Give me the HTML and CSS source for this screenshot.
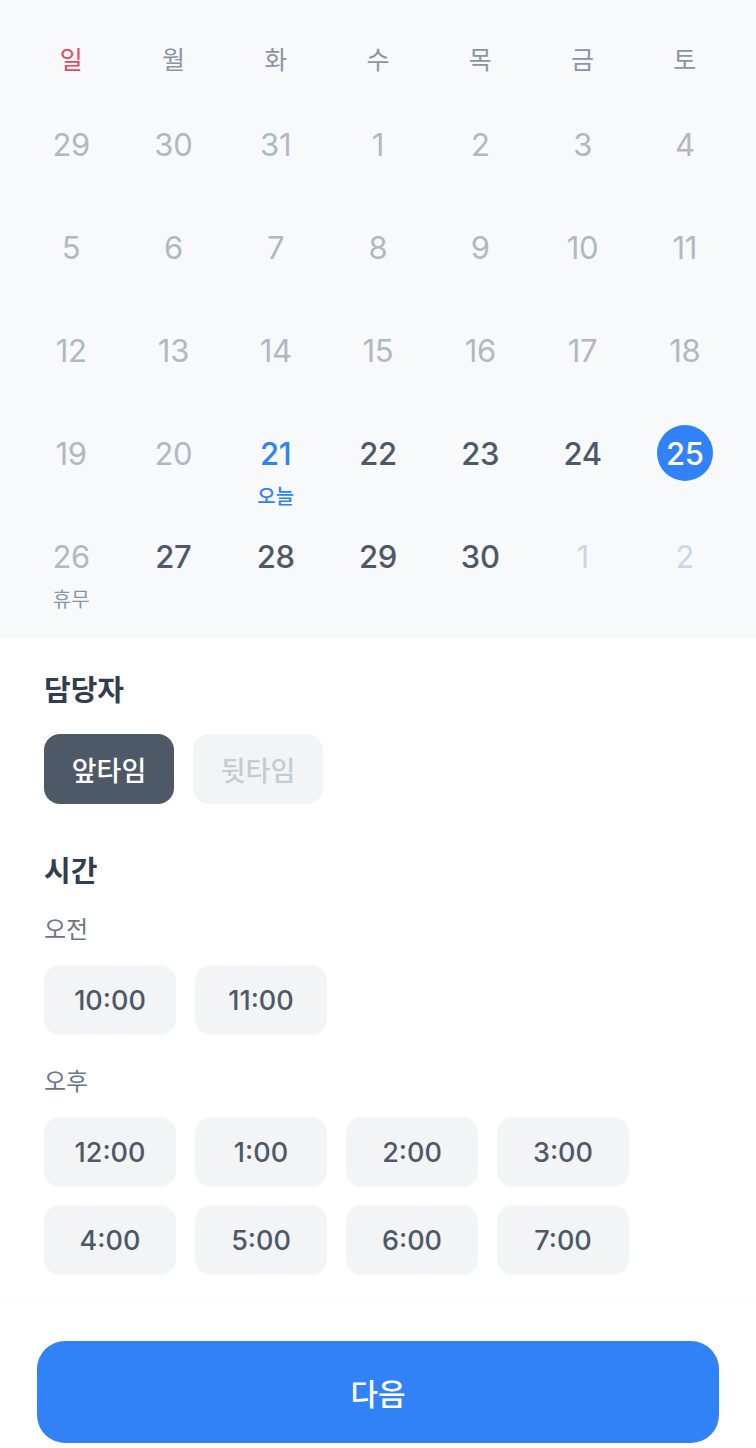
FILE: index.html
```html
<!DOCTYPE html>
<html lang="ko">
<head>
<meta charset="utf-8">
<link rel="stylesheet" href="styles.css">
</head>
<body>
<div class="page">
  <section class="calendar">
    <div class="weekdays">
      <div class="wd sun">일</div><div class="wd">월</div><div class="wd">화</div><div class="wd">수</div><div class="wd">목</div><div class="wd">금</div><div class="wd">토</div>
    </div>
    <div class="days">
      <div class="day past"><span class="num">29</span></div>
      <div class="day past"><span class="num">30</span></div>
      <div class="day past"><span class="num">31</span></div>
      <div class="day past"><span class="num">1</span></div>
      <div class="day past"><span class="num">2</span></div>
      <div class="day past"><span class="num">3</span></div>
      <div class="day past"><span class="num">4</span></div>

      <div class="day past"><span class="num">5</span></div>
      <div class="day past"><span class="num">6</span></div>
      <div class="day past"><span class="num">7</span></div>
      <div class="day past"><span class="num">8</span></div>
      <div class="day past"><span class="num">9</span></div>
      <div class="day past"><span class="num">10</span></div>
      <div class="day past"><span class="num">11</span></div>

      <div class="day past"><span class="num">12</span></div>
      <div class="day past"><span class="num">13</span></div>
      <div class="day past"><span class="num">14</span></div>
      <div class="day past"><span class="num">15</span></div>
      <div class="day past"><span class="num">16</span></div>
      <div class="day past"><span class="num">17</span></div>
      <div class="day past"><span class="num">18</span></div>

      <div class="day past"><span class="num">19</span></div>
      <div class="day past"><span class="num">20</span></div>
      <div class="day today"><span class="num">21</span><span class="sub">오늘</span></div>
      <div class="day"><span class="num">22</span></div>
      <div class="day"><span class="num">23</span></div>
      <div class="day"><span class="num">24</span></div>
      <div class="day selected"><span class="num">25</span></div>

      <div class="day past"><span class="num">26</span><span class="sub off">휴무</span></div>
      <div class="day"><span class="num">27</span></div>
      <div class="day"><span class="num">28</span></div>
      <div class="day"><span class="num">29</span></div>
      <div class="day"><span class="num">30</span></div>
      <div class="day next"><span class="num">1</span></div>
      <div class="day next"><span class="num">2</span></div>
    </div>
  </section>

  <section class="options">
    <h2 class="title">담당자</h2>
    <div class="chips">
      <button class="chip active">앞타임</button>
      <button class="chip disabled">뒷타임</button>
    </div>

    <h2 class="title time-title">시간</h2>
    <div class="period">오전</div>
    <div class="slots">
      <button class="slot">10:00</button>
      <button class="slot">11:00</button>
    </div>
    <div class="period pm">오후</div>
    <div class="slots">
      <button class="slot">12:00</button>
      <button class="slot">1:00</button>
      <button class="slot">2:00</button>
      <button class="slot">3:00</button>
      <button class="slot">4:00</button>
      <button class="slot">5:00</button>
      <button class="slot">6:00</button>
      <button class="slot">7:00</button>
    </div>
  </section>

  <footer class="footer">
    <button class="next-btn">다음</button>
  </footer>
</div>
</body>
</html>
```

FILE: styles.css
```css
* { box-sizing: border-box; }
html, body {
  margin: 0;
  padding: 0;
  background: #ffffff;
}
body {
  font-family: Inter, "Noto Sans CJK KR", "Noto Sans", sans-serif;
  color: #4e5968;
}
.page {
  width: 756px;
  min-height: 1448px;
}

/* Calendar */
.calendar {
  background: #f8f9fb;
  padding: 30px 20px 8px;
}
.weekdays {
  display: grid;
  grid-template-columns: repeat(7, 1fr);
  height: 56px;
  margin-bottom: 30px;
}
.wd {
  display: flex;
  align-items: center;
  justify-content: center;
  font-size: 25px;
  color: #8b95a1;
  font-weight: 400;
}
.wd.sun { color: #e5485a; }

.days {
  display: grid;
  grid-template-columns: repeat(7, 1fr);
  grid-auto-rows: 103px;
}
.day {
  display: flex;
  flex-direction: column;
  align-items: center;
}
.num {
  width: 56px;
  height: 56px;
  border-radius: 50%;
  display: flex;
  align-items: center;
  justify-content: center;
  font-size: 31px;
  font-weight: 500;
  color: #4e5968;
  letter-spacing: -0.3px;
}
.day.past .num { color: #b0b8c1; font-weight: 400; }
.day.next .num { color: #d1d6db; font-weight: 400; }
.day.today .num { color: #3182f6; font-weight: 500; }
.day.selected .num {
  background: #3182f6;
  color: #ffffff;
  font-weight: 500;
}
.sub {
  margin-top: 4px;
  height: 24px;
  line-height: 24px;
  font-size: 20px;
  font-weight: 500;
  color: #3182f6;
}
.sub.off { color: #8b95a1; font-weight: 400; }

/* Options */
.options {
  padding: 32px 44px 0;
}
.title {
  margin: 0;
  height: 40px;
  line-height: 40px;
  font-size: 29px;
  font-weight: 700;
  color: #333d4b;
}
.time-title { margin-top: 48px; }
.chips {
  display: flex;
  gap: 19px;
  margin-top: 23px;
}
button {
  font-family: inherit;
  border: none;
  cursor: pointer;
}
.chip {
  width: 130px;
  height: 70px;
  border-radius: 16px;
  font-size: 27px;
  font-weight: 500;
}
.chip.active {
  background: #4e5968;
  color: #ffffff;
}
.chip.disabled {
  background: #f2f4f6;
  color: #c5cbd2;
}
.period {
  margin-top: 22px;
  height: 32px;
  line-height: 32px;
  font-size: 24px;
  color: #6b7684;
}
.period.pm { margin-top: 31px; }
.slots {
  display: grid;
  grid-template-columns: repeat(4, 132px);
  column-gap: 19px;
  row-gap: 18px;
  margin-top: 19px;
}
.slot {
  height: 70px;
  border-radius: 16px;
  background: #f2f4f6;
  color: #4e5968;
  font-size: 27px;
  font-weight: 500;
}

/* Footer */
.footer {
  margin-top: 21px;
  border-top: 1px solid #fafbfc;
  padding: 44px 37px 5px;
}
.next-btn {
  width: 100%;
  height: 102px;
  border-radius: 28px;
  background: #3182f6;
  color: #ffffff;
  font-size: 30px;
  font-weight: 500;
}
```
